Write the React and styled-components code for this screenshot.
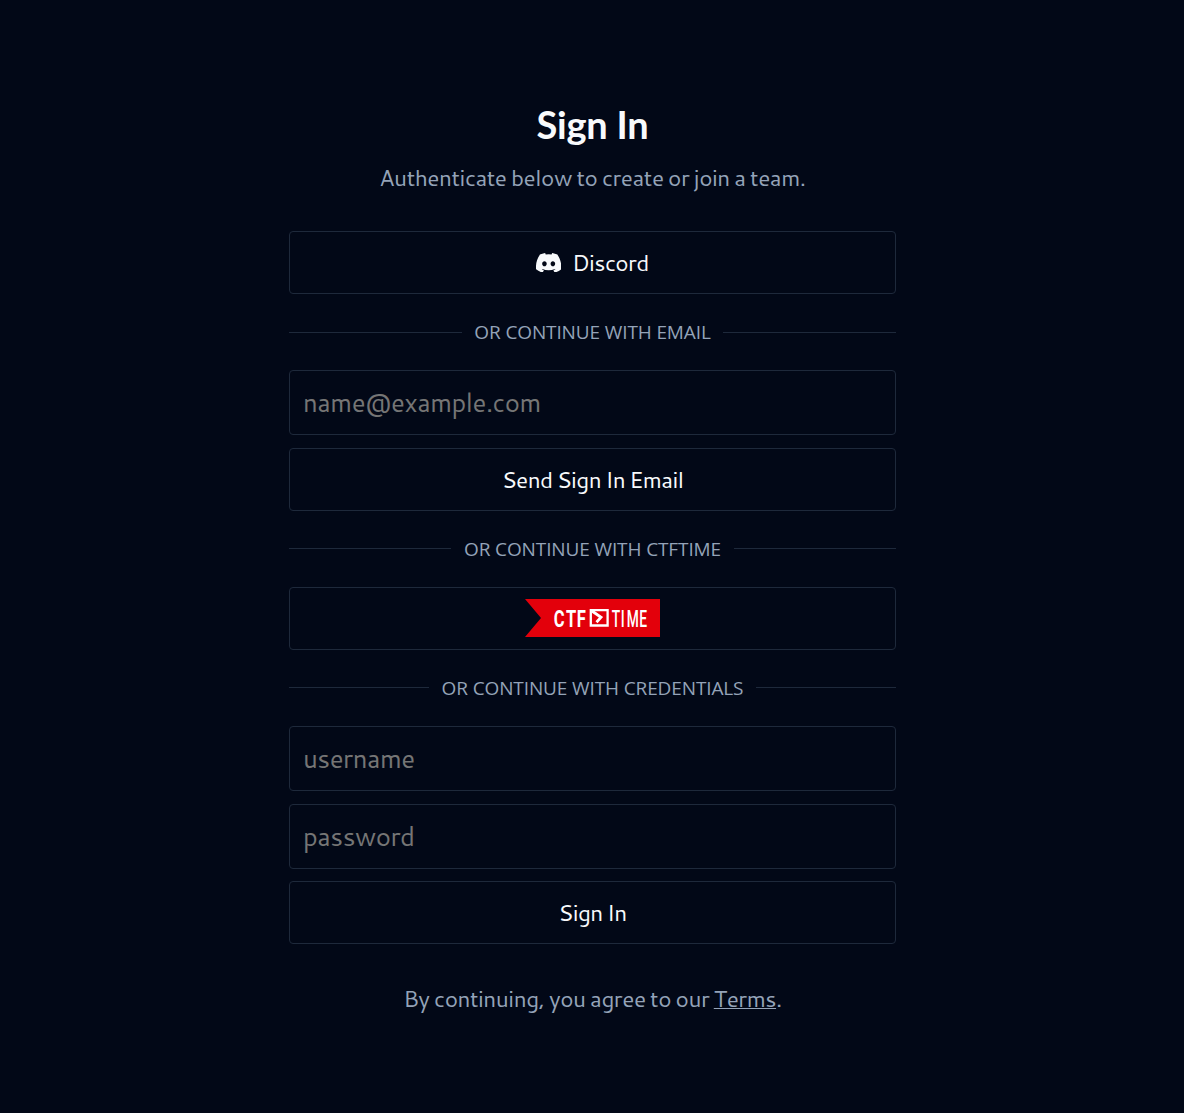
import React from 'react';
import styled, { createGlobalStyle } from 'styled-components';

const colors = {
  background: '#020817',
  foreground: '#f8fafc',
  muted: '#94a3b8',
  border: '#1e293b',
  placeholder: '#757575',
  brand: '#e3000b',
};

const GlobalStyle = createGlobalStyle`
  *, *::before, *::after { box-sizing: border-box; }
  body {
    margin: 0;
    background: ${colors.background};
    color: ${colors.foreground};
    font-family: Cantarell, 'Noto Sans', sans-serif;
    font-size: 22.6px;
    letter-spacing: -0.48px;
    word-spacing: -1.2px;
  }
`;

const Page = styled.main`
  min-height: 1113px;
  display: flex;
  justify-content: center;
  padding: 99px 0 0 1px;
`;

const Column = styled.div`
  width: 607px;
  display: flex;
  flex-direction: column;
`;

const Header = styled.header`
  display: flex;
  flex-direction: column;
  align-items: center;
  gap: 12px;
  height: 132px;
  text-align: center;
`;

const Title = styled.h1`
  margin: 0;
  font: 700 38px/50px Lato, 'Noto Sans', sans-serif;
  letter-spacing: -0.2px;
  word-spacing: 0;
`;

const Text = styled.p`
  margin: 0;
  line-height: 32px;
  text-align: center;
  color: ${colors.muted};
`;

const Button = styled.button`
  display: flex;
  align-items: center;
  justify-content: center;
  gap: 10.5px;
  width: 100%;
  height: 63px;
  padding: 0 0 2px;
  border: 1px solid ${colors.border};
  border-radius: 4px;
  background: transparent;
  color: ${colors.foreground};
  font: inherit;
  letter-spacing: -0.6px;
  word-spacing: -1.4px;
  line-height: 32px;
`;

const Form = styled.form`
  display: flex;
  flex-direction: column;
  gap: ${p => p.$gap || 13}px;
`;

const Fields = styled.div`
  display: flex;
  flex-direction: column;
  gap: 13px;
`;

const Input = styled.input`
  width: 100%;
  height: 65px;
  padding: 0 13px 2px;
  border: 1px solid ${colors.border};
  border-radius: 4px;
  outline: none;
  background: transparent;
  color: ${colors.foreground};
  font: inherit;
  font-size: 25.8px;
  letter-spacing: -0.48px;
  &::placeholder { color: ${colors.placeholder}; opacity: 1; }
`;

const Divider = styled.div`
  display: flex;
  align-items: center;
  gap: 12.6px;
  height: 76px;
  &::before, &::after {
    content: '';
    flex: 1;
    height: 1px;
    margin-bottom: ${p => (p.$raised ? 1 : 0)}px;
    background: ${colors.border};
  }
`;

const DividerLabel = styled.span`
  color: ${colors.muted};
  font: 400 19px/26px 'Open Sans', 'Noto Sans', sans-serif;
  letter-spacing: -0.12px;
  word-spacing: 0;
  text-transform: uppercase;
`;

const Footer = styled.footer`
  padding-top: 38px;
`;

const Terms = styled.a`
  color: inherit;
  text-decoration: underline;
  text-underline-offset: 1px;
  text-decoration-thickness: 1px;
`;

const DiscordMark = styled.svg`
  width: 25.3px;
  height: 19.6px;
  margin-top: 2px;
`;

function DiscordIcon() {
  return (
    <DiscordMark viewBox="27 32 586 448" preserveAspectRatio="none" fill="currentColor" aria-hidden="true">
      <path d="M524.531,69.836a1.5,1.5,0,0,0-.764-.7A485.065,485.065,0,0,0,404.081,32.03a1.816,1.816,0,0,0-1.923.91,337.461,337.461,0,0,0-14.9,30.6,447.848,447.848,0,0,0-134.426,0,309.541,309.541,0,0,0-15.135-30.6,1.89,1.89,0,0,0-1.924-.91A483.689,483.689,0,0,0,116.085,69.137a1.712,1.712,0,0,0-.788.676C39.068,183.651,18.186,294.69,28.43,404.354a2.016,2.016,0,0,0,.765,1.375A487.666,487.666,0,0,0,176.02,479.918a1.9,1.9,0,0,0,2.063-.676A348.2,348.2,0,0,0,208.12,430.4a1.86,1.86,0,0,0-1.019-2.588,321.173,321.173,0,0,1-45.868-21.853,1.885,1.885,0,0,1-.185-3.126c3.082-2.309,6.166-4.711,9.109-7.137a1.819,1.819,0,0,1,1.9-.256c96.229,43.917,200.41,43.917,295.5,0a1.812,1.812,0,0,1,1.924.233c2.944,2.426,6.027,4.851,9.132,7.16a1.884,1.884,0,0,1-.162,3.126,301.407,301.407,0,0,1-45.89,21.83,1.875,1.875,0,0,0-1,2.611,391.055,391.055,0,0,0,30.014,48.815,1.864,1.864,0,0,0,2.063.7A486.048,486.048,0,0,0,610.7,405.729a1.882,1.882,0,0,0,.765-1.352C623.729,277.594,590.933,167.465,524.531,69.836ZM222.491,337.58c-28.972,0-52.844-26.587-52.844-59.239S193.056,219.1,222.491,219.1c29.665,0,53.306,26.82,52.843,59.239C275.334,310.993,251.924,337.58,222.491,337.58Zm195.38,0c-28.971,0-52.843-26.587-52.843-59.239S388.437,219.1,417.871,219.1c29.667,0,53.307,26.82,52.844,59.239C470.715,310.993,447.538,337.58,417.871,337.58Z" />
    </DiscordMark>
  );
}

const Logo = styled.svg`
  overflow: visible;
`;

const LogoText = styled.text`
  font-family: Roboto, 'Liberation Sans', sans-serif;
  font-weight: ${p => p.$weight};
  font-size: 24.7px;
  letter-spacing: 0;
  word-spacing: 0;
  fill: #fff;
`;

function CtfTimeLogo() {
  return (
    <Logo width="135" height="38" viewBox="0 0 135 38" role="img" aria-label="CTFtime">
      <path d="M0 0H135V38H0L16 19Z" fill={colors.brand} />
      <LogoText transform="translate(28.8 27.6) scale(.67 1)" x="0 18.2 34.2" $weight={700}>CTF</LogoText>
      <path d="M65.8 11.2H82.6V26.5H65.8Z" fill="none" stroke="#fff" strokeWidth="2.3" />
      <path d="M67 12L76 18.3L71.5 23.2" fill="none" stroke="#fff" strokeWidth="2.8" />
      <LogoText transform="translate(86.8 27.6) scale(.56 1)" x="0 16.2 26.6 49" $weight={500}>TIME</LogoText>
    </Logo>
  );
}

const stop = e => e.preventDefault();

export default function App() {
  return (
    <>
      <GlobalStyle />
      <Page>
        <Column>
          <Header>
            <Title>Sign In</Title>
            <Text>Authenticate below to create or join a team.</Text>
          </Header>
          <Button type="button"><DiscordIcon />Discord</Button>
          <Divider><DividerLabel>Or continue with email</DividerLabel></Divider>
          <Form onSubmit={stop}>
            <Input type="email" placeholder="name@example.com" />
            <Button>Send Sign In Email</Button>
          </Form>
          <Divider $raised><DividerLabel>Or continue with CTFtime</DividerLabel></Divider>
          <Button type="button"><CtfTimeLogo /></Button>
          <Divider $raised><DividerLabel>Or continue with credentials</DividerLabel></Divider>
          <Form $gap={12} onSubmit={stop}>
            <Fields>
              <Input type="text" placeholder="username" />
              <Input type="password" placeholder="password" />
            </Fields>
            <Button>Sign In</Button>
          </Form>
          <Footer>
            <Text>By continuing, you agree to our <Terms href="#">Terms</Terms>.</Text>
          </Footer>
        </Column>
      </Page>
    </>
  );
}
